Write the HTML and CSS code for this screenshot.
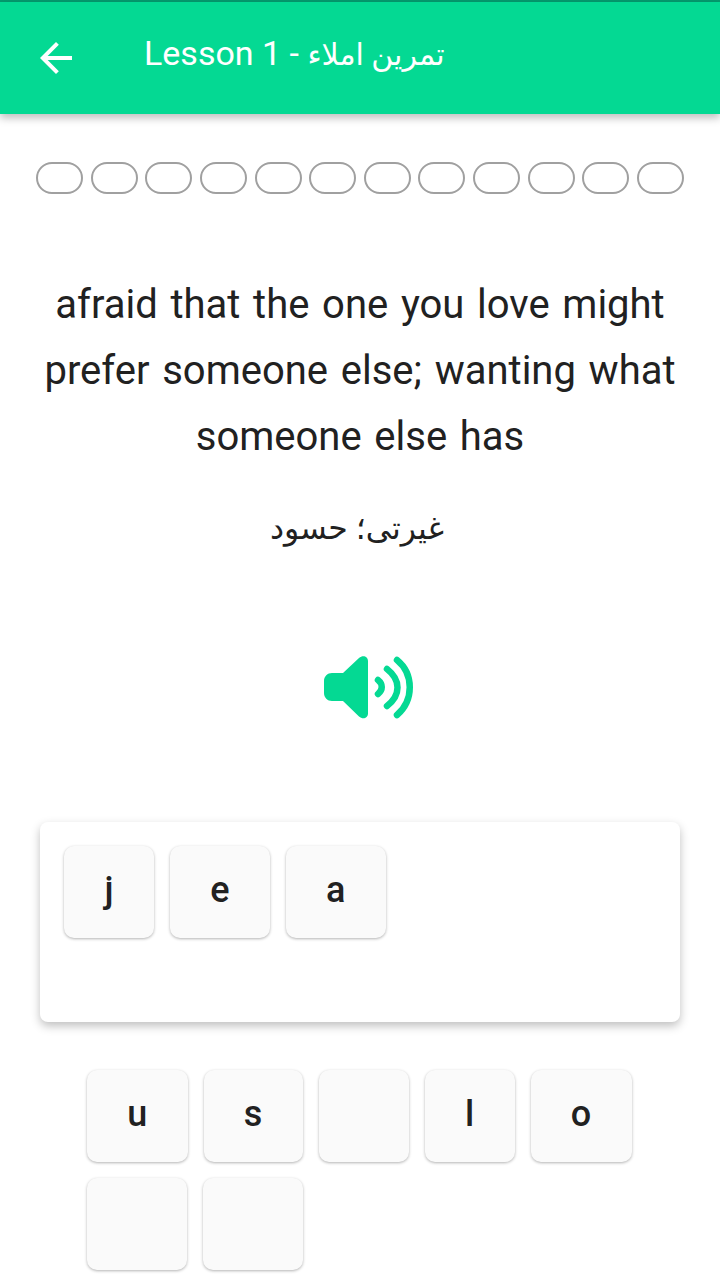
FILE: index.html
```html
<!DOCTYPE html>
<html lang="en">
<head>
    <meta charset="UTF-8">
    <meta name="viewport" content="width=device-width, initial-scale=1.0">
    <title>Lesson 1</title>
    <link rel="stylesheet" href="styles.css">
</head>
<body>
    <div class="status-line"></div>
    <header class="app-bar">
        <svg class="back-icon" viewBox="0 0 24 24" width="48" height="48" aria-hidden="true">
            <path d="M20 11H7.830l5.590-5.590L12 4l-8 8 8 8 1.410-1.410L7.830 13H20v-2z" fill="#fff"/>
        </svg>
        <div class="app-title">Lesson 1 - <span class="app-title-fa" dir="rtl">تمرین املاء</span></div>
    </header>

    <div class="progress">
        <span class="dot"></span><span class="dot"></span><span class="dot"></span><span class="dot"></span>
        <span class="dot"></span><span class="dot"></span><span class="dot"></span><span class="dot"></span>
        <span class="dot"></span><span class="dot"></span><span class="dot"></span><span class="dot"></span>
    </div>

    <p class="definition">afraid that the one you love might prefer someone else; wanting what someone else has</p>
    <p class="translation" dir="rtl">غیرتی؛ حسود</p>

    <div class="sound">
        <svg viewBox="0 0 92 68" width="92" height="68" aria-hidden="true">
            <path d="M8 18h11L35 3c4-3.500 9-1.500 9 3v52.500c0 4.500-5 6.500-9 3L19 46H8c-4.500 0-8-3.500-8-8V26c0-4.500 3.500-8 8-8z" fill="#04d993"/>
            <g fill="none" stroke="#04d993" stroke-width="6.500" stroke-linecap="round">
                <path d="M54 25c5 4 5 10 0 14"/>
                <path d="M63 14c14 11 14 26 0 37"/>
                <path d="M73 5c17 14 17 40 0 55"/>
            </g>
        </svg>
    </div>

    <div class="answer-card">
        <div class="tile">j</div>
        <div class="tile">e</div>
        <div class="tile">a</div>
    </div>

    <div class="letter-pool">
        <div class="tile">u</div>
        <div class="tile">s</div>
        <div class="tile"></div>
        <div class="tile">l</div>
        <div class="tile">o</div>
        <div class="tile tile-wide"></div>
        <div class="tile tile-wide"></div>
    </div>
</body>
</html>
```
FILE: styles.css
```css
* {
    box-sizing: border-box;
}
html, body {
    height: 1280px;
    overflow: hidden;
}
body {
    margin: 0;
    background-color: #fff;
    color: #212121;
    font-family: Roboto, "DejaVu Sans", sans-serif;
}
.status-line {
    height: 2px;
    background-color: #059a6e;
}
.app-bar {
    height: 112px;
    padding-left: 32px;
    display: flex;
    align-items: center;
    background-color: #04d993;
    box-shadow: 0 4px 8px rgba(0,0,0,0.25);
    color: #fff;
}
.back-icon {
    flex: none;
}
.app-title {
    margin-left: 64px;
    margin-bottom: 10px;
    font-size: 34px;
    white-space: nowrap;
}
.app-title-fa {
    font-size: 30px;
}
.progress {
    margin-top: 48px;
    padding: 0 36px;
    display: flex;
    justify-content: space-between;
}
.dot {
    width: 47px;
    height: 32px;
    border: 2px solid #a0a0a0;
    border-radius: 16px;
}
.definition {
    margin: 78px 36px 0;
    font-size: 40px;
    line-height: 66px;
    word-spacing: 2.75px;
    text-align: center;
}
.translation {
    margin: 26px 0 0;
    padding-right: 6px;
    font-size: 31.5px;
    line-height: 66px;
    text-align: center;
}
.sound {
    margin-top: 93px;
    padding-left: 324px;
    height: 68px;
}
.answer-card {
    margin: 99px 40px 0;
    height: 200px;
    padding: 24px;
    display: flex;
    align-items: flex-start;
    gap: 16px;
    border-radius: 8px;
    background-color: #fff;
    box-shadow: 0 4px 10px rgba(0,0,0,0.25);
}
.letter-pool {
    margin-top: 48px;
    padding: 0 80px 0 87px;
    display: flex;
    flex-wrap: wrap;
    gap: 16px;
}
.tile {
    min-width: 90px;
    height: 92px;
    padding: 0 40.25px 5px;
    display: flex;
    align-items: center;
    justify-content: center;
    border-radius: 10px;
    background-color: #fafafa;
    box-shadow: 0 1px 3px rgba(0,0,0,0.3);
    font-size: 36px;
    font-weight: 500;
}
.tile-wide {
    width: 100px;
}
```
